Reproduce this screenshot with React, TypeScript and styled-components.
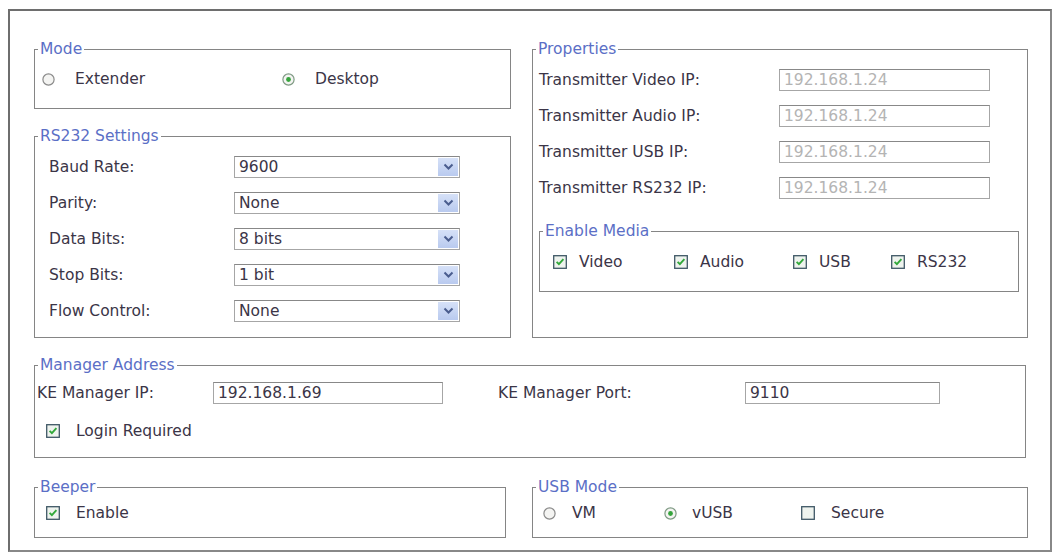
import styled, { createGlobalStyle } from "styled-components";

const GlobalStyle = createGlobalStyle`
  body {
    margin: 0;
    background: #ffffff;
    font-family: "DejaVu Sans", Verdana, sans-serif;
    font-size: 15.5px;
    color: #3b3547;
  }
`;

const Frame = styled.div`
  box-sizing: border-box;
  width: 1044px;
  height: 543px;
  margin: 9px 0 0 8px;
  border: 2px solid #6e6e6e;
  border-right-color: #888888;
  border-bottom-color: #888888;
  padding: 30px 24px 12px 24px;
  display: flex;
  flex-direction: column;
  gap: 19px;
`;

const TopRow = styled.div`
  display: grid;
  grid-template-columns: 477px 496px;
  column-gap: 21px;
`;

const LeftColumn = styled.div`
  display: flex;
  flex-direction: column;
  gap: 19px;
`;

const BottomRow = styled.div`
  display: grid;
  grid-template-columns: 472px 496px;
  column-gap: 26px;
  margin-top: 2px;
`;

// the legend sits at the content edge, so pull it back by the left padding
const Box = styled.fieldset<{ $h: number; $pt: number; $pl: number }>`
  box-sizing: border-box;
  margin: 0;
  min-width: 0;
  height: ${(p) => p.$h}px;
  padding: ${(p) => p.$pt}px 0 0 ${(p) => p.$pl}px;
  border: 1px solid #858585;

  & > legend {
    margin-left: ${(p) => 3 - p.$pl}px;
  }
`;

const InnerBox = styled(Box)`
  width: 480px;
  margin-top: 24px;
`;

const Legend = styled.legend`
  padding: 0 2px;
  font-size: 15.5px;
  line-height: 16px;
  color: #5b6fc6;
`;

const Stack = styled.div<{ $gap: number }>`
  display: flex;
  flex-direction: column;
  gap: ${(p) => p.$gap}px;
`;

const FieldRow = styled.div`
  display: flex;
  align-items: center;
  height: 22px;
`;

const Label = styled.span<{ $w: number; $ml?: number }>`
  flex: none;
  width: ${(p) => p.$w}px;
  margin-left: ${(p) => p.$ml ?? 0}px;
  white-space: nowrap;
`;

const OptionRow = styled.div<{ $pl: number }>`
  display: flex;
  align-items: center;
  height: 18px;
  padding-left: ${(p) => p.$pl}px;
`;

const Option = styled.label<{ $w?: number; $gap: number }>`
  display: flex;
  align-items: center;
  flex: none;
  gap: ${(p) => p.$gap}px;
  width: ${(p) => (p.$w ? `${p.$w}px` : "auto")};
  white-space: nowrap;
`;

const TextInput = styled.input<{ $w: number; $muted?: boolean }>`
  box-sizing: border-box;
  width: ${(p) => p.$w}px;
  height: 22px;
  margin: 0;
  padding: 0 4px;
  border: 1px solid #a6a6a6;
  border-top-color: #888888;
  background: #ffffff;
  font-family: "DejaVu Sans", Verdana, sans-serif;
  font-size: 15.5px;
  color: ${(p) => (p.$muted ? "#b4b4b4" : "#3b3547")};
  outline: none;
`;

const SelectBox = styled.div<{ $w: number }>`
  box-sizing: border-box;
  display: flex;
  align-items: center;
  justify-content: space-between;
  width: ${(p) => p.$w}px;
  height: 22px;
  padding: 1px 1px 1px 4px;
  border: 1px solid #a6a6a6;
  border-top-color: #888888;
  background: #ffffff;
`;

const SelectArrow = styled.span`
  display: flex;
  align-items: center;
  justify-content: center;
  width: 20px;
  height: 18px;
  background: linear-gradient(#d6e1f8, #b9caef);
`;

function Radio({ checked }: { checked?: boolean }) {
  return (
    <svg width="13" height="13" viewBox="0 0 13 13">
      <circle
        cx="6.5"
        cy="6.5"
        r="5.6"
        fill="#f4f4f2"
        stroke={checked ? "#7f9a84" : "#8a8a8a"}
        strokeWidth="1.2"
      />
      {checked && <circle cx="6.5" cy="6.5" r="2.4" fill="#35a43c" />}
    </svg>
  );
}

function Check({ checked }: { checked?: boolean }) {
  return (
    <svg width="14" height="14" viewBox="0 0 14 14">
      <rect
        x="0.7"
        y="0.7"
        width="12.6"
        height="12.6"
        fill="#eef3ee"
        stroke="#3f5866"
        strokeWidth="1.3"
      />
      {checked && (
        <path
          d="M3.6 6.9 L5.9 9.2 L10.4 4.2"
          fill="none"
          stroke="#31a83a"
          strokeWidth="1.9"
        />
      )}
    </svg>
  );
}

function Select({ value }: { value: string }) {
  return (
    <SelectBox $w={226}>
      <span>{value}</span>
      <SelectArrow>
        <svg width="11" height="8" viewBox="0 0 11 8">
          <path
            d="M1.5 1.5 L5.5 5.5 L9.5 1.5"
            fill="none"
            stroke="#4a5d8e"
            strokeWidth="2"
          />
        </svg>
      </SelectArrow>
    </SelectBox>
  );
}

const rs232 = [
  { label: "Baud Rate:", value: "9600" },
  { label: "Parity:", value: "None" },
  { label: "Data Bits:", value: "8 bits" },
  { label: "Stop Bits:", value: "1 bit" },
  { label: "Flow Control:", value: "None" },
];

const transmitters = [
  "Transmitter Video IP:",
  "Transmitter Audio IP:",
  "Transmitter USB IP:",
  "Transmitter RS232 IP:",
];

const media = [
  { name: "Video", w: 121 },
  { name: "Audio", w: 119 },
  { name: "USB", w: 98 },
  { name: "RS232" },
];

export default function App() {
  return (
    <>
      <GlobalStyle />
      <Frame>
        <TopRow>
          <LeftColumn>
            <Box $h={68} $pt={13} $pl={7}>
              <Legend>Mode</Legend>
              <OptionRow $pl={0}>
                <Option $w={240} $gap={20}>
                  <Radio />
                  Extender
                </Option>
                <Option $gap={20}>
                  <Radio checked />
                  Desktop
                </Option>
              </OptionRow>
            </Box>
            <Box $h={210} $pt={12} $pl={14}>
              <Legend>RS232 Settings</Legend>
              <Stack $gap={14}>
                {rs232.map((r) => (
                  <FieldRow key={r.label}>
                    <Label $w={185}>{r.label}</Label>
                    <Select value={r.value} />
                  </FieldRow>
                ))}
              </Stack>
            </Box>
          </LeftColumn>
          <Box $h={297} $pt={12} $pl={6}>
            <Legend>Properties</Legend>
            <Stack $gap={14}>
              {transmitters.map((t) => (
                <FieldRow key={t}>
                  <Label $w={240}>{t}</Label>
                  <TextInput $w={211} $muted readOnly disabled value="192.168.1.24" />
                </FieldRow>
              ))}
            </Stack>
            <InnerBox $h={69} $pt={14} $pl={13}>
              <Legend>Enable Media</Legend>
              <OptionRow $pl={0}>
                {media.map((m) => (
                  <Option key={m.name} $w={m.w} $gap={12}>
                    <Check checked />
                    {m.name}
                  </Option>
                ))}
              </OptionRow>
            </InnerBox>
          </Box>
        </TopRow>

        <Box $h={101} $pt={9} $pl={2}>
          <Legend>Manager Address</Legend>
          <Stack $gap={18}>
            <FieldRow>
              <Label $w={176}>KE Manager IP:</Label>
              <TextInput $w={230} readOnly value="192.168.1.69" />
              <Label $w={247} $ml={55}>
                KE Manager Port:
              </Label>
              <TextInput $w={195} readOnly value="9110" />
            </FieldRow>
            <OptionRow $pl={9}>
              <Option $gap={16}>
                <Check checked />
                Login Required
              </Option>
            </OptionRow>
          </Stack>
        </Box>

        <BottomRow>
          <Box $h={59} $pt={9} $pl={11}>
            <Legend>Beeper</Legend>
            <OptionRow $pl={0}>
              <Option $gap={16}>
                <Check checked />
                Enable
              </Option>
            </OptionRow>
          </Box>
          <Box $h={59} $pt={9} $pl={10}>
            <Legend>USB Mode</Legend>
            <OptionRow $pl={0}>
              <Option $w={121} $gap={16}>
                <Radio />
                VM
              </Option>
              <Option $w={137} $gap={15}>
                <Radio checked />
                vUSB
              </Option>
              <Option $gap={16}>
                <Check />
                Secure
              </Option>
            </OptionRow>
          </Box>
        </BottomRow>
      </Frame>
    </>
  );
}
